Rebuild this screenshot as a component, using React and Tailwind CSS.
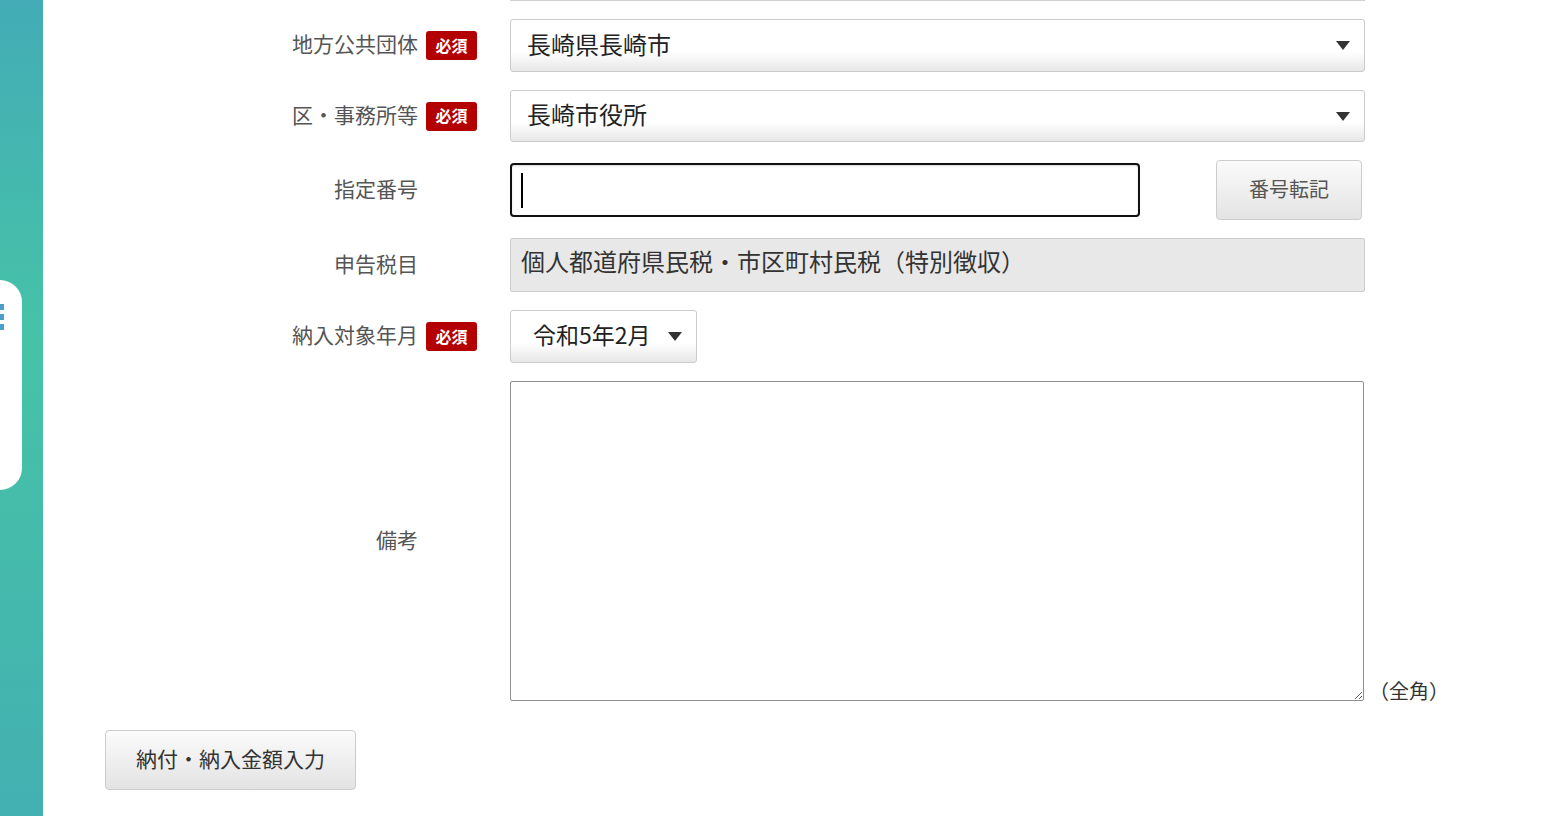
import { useState } from "react";

const font = { fontFamily: '"Noto Sans CJK JP", "Noto Sans", sans-serif' };

function Badge() {
  return (
    <span className="inline-flex h-[29px] w-[51px] items-center justify-center rounded-[3px] bg-[#b30000] pb-[2px] text-[16px] font-bold text-white leading-none">
      必須
    </span>
  );
}

function Arrow() {
  return (
    <svg width="14" height="9" viewBox="0 0 14 9" className="shrink-0">
      <path d="M0 0 L14 0 L7 9 Z" fill="#333" />
    </svg>
  );
}

// 行: ラベル + 必須バッジ枠 + 入力欄
function Row({ label, required, children, extra }) {
  return (
    <div className="flex items-center">
      <div className="flex w-[372px] shrink-0 items-center">
        <div className="w-[313px] pb-[4px] text-right text-[21px] text-[#555] leading-none">
          {label}
        </div>
        <div className="w-[59px] pl-2">{required && <Badge />}</div>
      </div>
      <div className="ml-[33px] w-[855px] shrink-0">{children}</div>
      {extra}
    </div>
  );
}

function SelectBox({ value, pad = "pl-4", h = "h-[52px]", size = "text-[24px]" }) {
  return (
    <div
      className={`flex ${h} w-full items-center justify-between rounded-[3px] border border-[#ccc] bg-[linear-gradient(180deg,#ffffff_0%,#ffffff_62%,#e7e7e7_100%)] ${pad} pr-[14px] ${size} text-[#222]`}
    >
      <span className="pb-[4px]">{value}</span>
      <Arrow />
    </div>
  );
}

export default function App() {
  const [note, setNote] = useState("");

  return (
    <div className="flex h-[816px] w-full overflow-hidden bg-white" style={font}>
      {/* 左サイドバー */}
      <aside className="flex h-full w-[43px] shrink-0 flex-col bg-[linear-gradient(180deg,#43acb6_0%,#46c3a7_42%,#43b0b1_100%)]">
        <div className="mt-[280px] flex h-[210px] w-[22px] flex-col gap-[4px] rounded-r-[22px] bg-white pt-[24px]">
          <span className="h-[6px] w-[4px] bg-[#4c9fca]" />
          <span className="h-[6px] w-[4px] bg-[#4c9fca]" />
          <span className="h-[6px] w-[4px] bg-[#4c9fca]" />
        </div>
      </aside>

      <main className="flex-1 pl-[62px]">
        {/* 上の欄の下端 */}
        <div className="ml-[405px] h-px w-[855px] bg-[#d0d0d0]" />

        <div className="mt-[18px] flex flex-col gap-[18px]">
          <Row label="地方公共団体" required>
            <SelectBox value="長崎県長崎市" h="h-[53px]" />
          </Row>

          <Row label="区・事務所等" required>
            <SelectBox value="長崎市役所" />
          </Row>

          <Row label="指定番号">
            <div className="flex h-[60px] items-center justify-between">
              <div className="flex h-[54px] w-[630px] items-center rounded-[4px] border-2 border-[#111] bg-white pl-[9px] shadow-[inset_0_1px_2px_rgba(0,0,0,0.15)]">
                <span className="h-[35px] w-[2px] bg-black" />
              </div>
              <button
                type="button"
                className="mr-[3px] h-[60px] w-[146px] rounded-[4px] border border-[#ccc] bg-[linear-gradient(180deg,#fbfbfb_0%,#e3e3e3_100%)] pb-[3px] text-[20px] text-[#555]"
              >
                番号転記
              </button>
            </div>
          </Row>

          <Row label="申告税目">
            <div className="flex h-[54px] w-full items-start rounded-[2px] border border-[#ccc] bg-[#e8e8e8] pl-[10px] pt-[4px] text-[24px] text-[#333]">
              個人都道府県民税・市区町村民税（特別徴収）
            </div>
          </Row>

          <Row label="納入対象年月" required>
            <div className="w-[187px]">
              <SelectBox value="令和5年2月" pad="pl-[22px]" h="h-[53px]" size="text-[23px]" />
            </div>
          </Row>

          <Row
            label="備考"
            extra={
              <span className="ml-[4px] self-end text-[20px] leading-none text-[#333]">
                （全角）
              </span>
            }
          >
            <textarea
              value={note}
              onChange={(e) => setNote(e.target.value)}
              className="block h-[320px] w-[854px] rounded-[2px] border border-[#8f8f8f] bg-white p-2 text-[20px] outline-none"
            />
          </Row>
        </div>

        <button
          type="button"
          className="mt-[29px] h-[60px] w-[251px] rounded-[4px] border border-[#ccc] bg-[linear-gradient(180deg,#fbfbfb_0%,#e3e3e3_100%)] pb-[3px] text-[21px] text-[#333]"
        >
          納付・納入金額入力
        </button>
      </main>
    </div>
  );
}
